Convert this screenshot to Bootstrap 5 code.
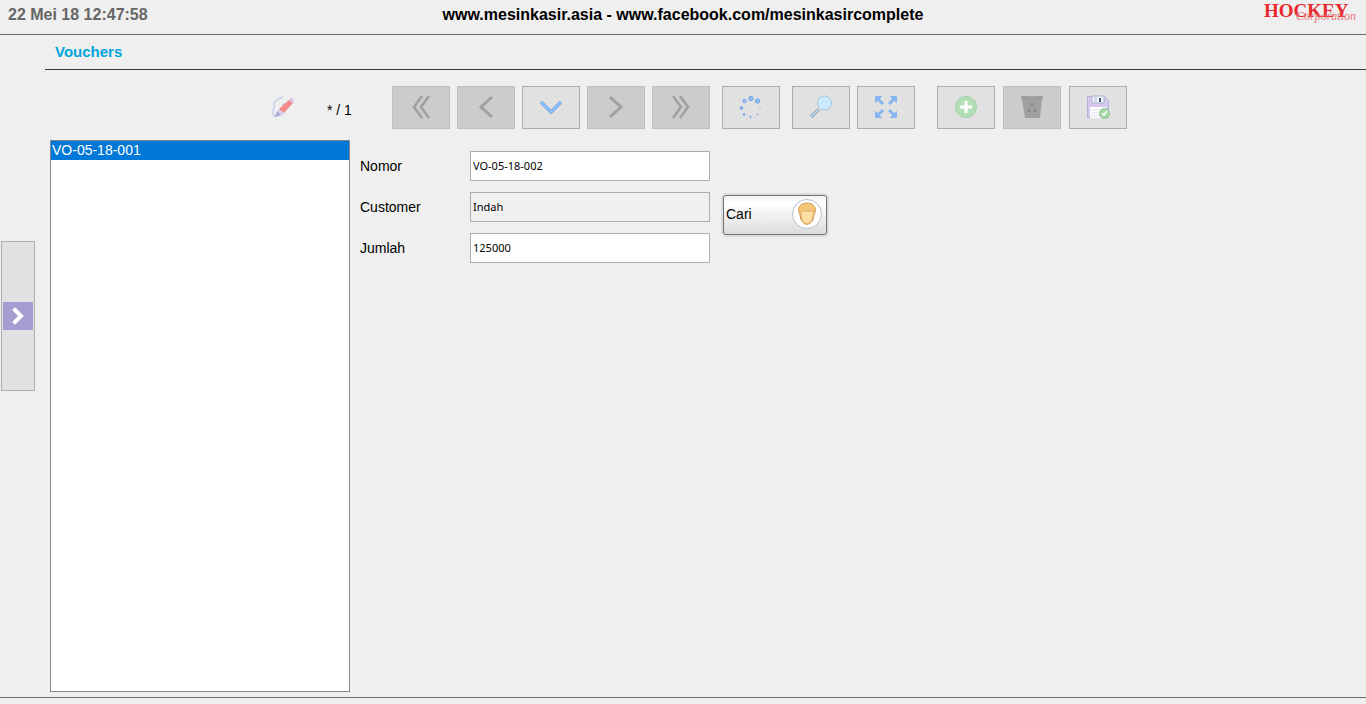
<!DOCTYPE html>
<html lang="id">
<head>
<meta charset="utf-8">
<meta name="viewport" content="width=device-width, initial-scale=1">
<title>Vouchers</title>
<link href="https://cdn.jsdelivr.net/npm/bootstrap@5.3.0/dist/css/bootstrap.min.css" rel="stylesheet">
<style>
  body { background: #efefef; color: #000; font: 14px/20px "Liberation Sans", Arial, sans-serif; }
  .topbar { height: 35px; border-bottom: 1px solid #696969; font-size: 16px; font-weight: 700; }
  .topbar > * { flex: 1 1 0; }
  .topbar .site { flex: 0 0 auto; line-height: 30px; }
  .clock { color: #666; line-height: 30px; }
  .rail { width: 45px; padding: 206px 0 0 1px; }
  .rail-toggle { width: 34px; height: 150px; background: #e1e1e1; border: 1px solid #adadad; }
  .rail-toggle span { height: 28px; background: #a69cd2; margin: 0 1px; }
  .screen-title { height: 35px; border-bottom: 1px solid #3c3c3c; padding-left: 10px; color: #00a5dc; font-size: 15px; font-weight: 700; line-height: 34px; }
  .tools { padding: 16px 0 11px 226px; }
  .mode { width: 56px; padding-bottom: 2px; }
  .counter { width: 65px; padding-top: 5px; }
  .tool-set { gap: 7px; margin-right: 12px; }
  .tool-set.wide { gap: 8px; margin-left: 10px; }
  .tool { width: 58px; height: 43px; padding: 0 0 2px; background: #e1e1e1; border: 1px solid #adadad; border-radius: 0; }
  .tool:disabled { background: #ccc; border-color: #bfbfbf; opacity: 1; }
  .tool svg, .mode svg { display: block; }
  .records-row { padding-left: 5px; }
  .records { width: 300px; padding: 0; border: 1px solid #828790; background: #fff; outline: 0; overflow: hidden; font-size: 14px; }
  .records option { padding: 1px 1px 0; line-height: 18px; min-height: 19px; color: #000; }
  .records option:checked { background: #0078d7 linear-gradient(#0078d7, #0078d7); -webkit-text-fill-color: #fff; }
  .voucher-form { padding: 11px 10px; gap: 13px; }
  .field { margin-bottom: 11px; }
  .field label { width: 110px; }
  .field input { width: 240px; height: 30px; padding: 0 2px 2px; border: 1px solid #abadb3; border-radius: 0; background: #fff; color: #000; font: 11px/14px "Noto Sans", Tahoma, sans-serif; }
  .field input[readonly] { background: #f0f0f0; }
  .find { width: 104px; height: 40px; margin-top: 44px; padding: 0 3px 2px 2px; border: 1px solid #707070; border-radius: 3px; background: linear-gradient(#f4f4f4, #fff 20%, #dcdcdc); box-shadow: 0 0 0 2px #dcdcdc; color: #000; font-size: 14px; }
  .bottombar { height: 7px; border-top: 1px solid #696969; margin-top: 5px; }
</style>
</head>
<body class="d-flex flex-column min-vh-100">
<header class="topbar d-flex">
  <time class="clock ps-2">22 Mei 18 12:47:58</time>
  <div class="site">www.mesinkasir.asia - www.facebook.com/mesinkasircomplete</div>
  <div class="d-flex justify-content-end pe-2">
    <svg width="96" height="26" role="img" aria-label="Hockey Corporation">
      <text x="2" y="17" font-family="Liberation Serif, serif" font-weight="700" font-size="19" fill="#e8282b">HOCKEY</text>
      <text x="34" y="20" font-family="Liberation Serif, serif" font-style="italic" font-weight="400" font-size="12" fill="#e8777a">Corporation</text>
    </svg>
  </div>
</header>

<div class="d-flex flex-grow-1">
  <nav class="rail flex-shrink-0" aria-label="Menu">
    <button type="button" class="rail-toggle d-flex flex-column justify-content-center p-0" aria-label="Buka menu">
      <span class="d-flex align-items-center justify-content-center align-self-stretch">
        <svg width="14" height="18" fill="none" stroke="#fff" stroke-width="4"><path d="M4 3l6 6-6 6" stroke-linecap="square"/></svg>
      </span>
    </button>
  </nav>

  <main class="d-flex flex-column flex-grow-1">
    <h1 class="screen-title mb-0">Vouchers</h1>

    <div class="tools d-flex align-items-center">
      <div class="mode">
        <svg width="25" height="24" fill="none">
          <path d="M12 2C8 3 2 7 3 9c2 3-2 6-1 9q0 3 3 4" stroke="#c7d2ea" stroke-width="1.5"/>
          <path d="M4 22l2-6 5 4z" fill="#a9aad6"/>
          <path d="M6 16l2-2 5 4-3 3z" fill="#d6cdec"/>
          <path d="M8 14L18 5l4 3-9 10z" fill="#f58a8b"/>
          <path d="M18 5l2-2q2 0 3 2 0 1-1 3z" fill="#dbc6e8"/>
          <path d="M11 10l4-2" stroke="#b9b5df"/>
        </svg>
      </div>
      <div class="counter">* / 1</div>
      <div class="tool-set d-flex">
        <button type="button" class="tool btn d-flex align-items-center justify-content-center" disabled aria-label="Pertama">
          <svg width="24" height="24" fill="none" stroke="#a0a0a0" stroke-width="2.5"><path d="M13 1L5 12l8 11M20 1l-8 11 8 11"/></svg>
        </button>
        <button type="button" class="tool btn d-flex align-items-center justify-content-center" disabled aria-label="Sebelumnya">
          <svg width="24" height="24" fill="none" stroke="#a0a0a0" stroke-width="3"><path d="M18 2L7 12l11 10"/></svg>
        </button>
        <button type="button" class="tool btn d-flex align-items-center justify-content-center" aria-label="Buka">
          <svg width="24" height="24" fill="none"><path d="M2 7l10 10L22 7" stroke="#7da9e6" stroke-width="3.5"/><path d="M2 7l10 10L22 7" stroke="#8fc8fb" stroke-width="1.5"/></svg>
        </button>
        <button type="button" class="tool btn d-flex align-items-center justify-content-center" disabled aria-label="Berikutnya">
          <svg width="24" height="24" fill="none" stroke="#a0a0a0" stroke-width="3"><path d="M6 2l11 10L6 22"/></svg>
        </button>
        <button type="button" class="tool btn d-flex align-items-center justify-content-center" disabled aria-label="Terakhir">
          <svg width="24" height="24" fill="none" stroke="#a0a0a0" stroke-width="2.5"><path d="M4 1l8 11-8 11M11 1l8 11-8 11"/></svg>
        </button>
      </div>
      <div class="tool-set d-flex">
        <button type="button" class="tool btn d-flex align-items-center justify-content-center" aria-label="Muat ulang">
          <svg width="24" height="24" fill="#8dbcf5" stroke="#7ba6e6">
            <circle cx="12" cy="3.5" r="2.2"/><circle cx="18.5" cy="6" r="2.2"/><circle cx="5.500" cy="6" r="1.700"/><circle cx="2.500" cy="13" r="1.400"/><circle cx="5" cy="19.500" r="1"/><circle cx="11.500" cy="22" r=".7"/><circle cx="18.500" cy="19.500" r=".5"/><circle cx="21" cy="13" r=".2"/>
          </svg>
        </button>
      </div>
      <div class="tool-set d-flex">
        <button type="button" class="tool btn d-flex align-items-center justify-content-center" aria-label="Cari data">
          <svg width="24" height="24" fill="none"><path d="M2 22l8-8" stroke="#94aec4" stroke-width="3.500"/><path d="M2 22l8-8" stroke="#c5d9e8" stroke-width="1.500"/><circle cx="15.500" cy="8" r="7" fill="#cdebff" stroke="#a9c4d8"/></svg>
        </button>
        <button type="button" class="tool btn d-flex align-items-center justify-content-center" aria-label="Layar penuh">
          <svg width="24" height="24" fill="#86b5f3" stroke="#86b5f3">
            <g id="arrow"><path d="M1.500 1.500h6L1.500 7.500z"/><path d="M3 3l6 6" stroke-width="3"/></g>
            <use href="#arrow" transform="matrix(-1 0 0 1 24 0)"/><use href="#arrow" transform="matrix(1 0 0 -1 0 24)"/><use href="#arrow" transform="rotate(180 12 12)"/>
          </svg>
        </button>
      </div>
      <div class="tool-set wide d-flex">
        <button type="button" class="tool btn d-flex align-items-center justify-content-center" aria-label="Tambah">
          <svg width="24" height="24"><circle cx="12" cy="12" r="10.500" fill="#b4e0b7" stroke="#9fd0a6"/><path d="M12 6v12M6 12h12" stroke="#fff" stroke-width="3"/></svg>
        </button>
        <button type="button" class="tool btn d-flex align-items-center justify-content-center" disabled aria-label="Hapus">
          <svg width="24" height="24"><path d="M1 1h22v3h-1l-2 19H5L2 4H1z" fill="#a0a0a0"/><path d="M1 3.500h22" stroke="#989898"/><path d="M10 11l2-3 2 3M15 13l1 3h-3M9 13l-1 3h3" fill="none" stroke="#8c8c8c" stroke-width="1.500"/></svg>
        </button>
        <button type="button" class="tool btn d-flex align-items-center justify-content-center" aria-label="Simpan">
          <svg width="24" height="24"><path d="M1.500 1.500h17l4 4v17h-21z" fill="#d5c8ec" stroke="#baaed8"/><path d="M6 1h12v7H6z" fill="#f5f5fc" stroke="#a7b0cf"/><path d="M8 2h3v6H8z" fill="#ccd6ea"/><path d="M13 3h2v4h-2z" fill="#40537c"/><path d="M4 12h16v11H4z" fill="#fff"/><path d="M5 15h12M5 18h10M5 21h9" stroke="#ddddec"/><circle cx="18.500" cy="18.500" r="5" fill="#a3d7a4" stroke="#8ec591"/><path d="M16 18l2 2 3-4" fill="none" stroke="#fff" stroke-width="1.500"/></svg>
        </button>
      </div>
    </div>

    <div class="records-row d-flex flex-grow-1">
      <select class="records flex-shrink-0 rounded-0" size="2" aria-label="Daftar voucher">
        <option selected>VO-05-18-001</option>
      </select>
      <form class="voucher-form d-flex align-items-start">
        <div>
          <div class="field d-flex align-items-center"><label for="nomor">Nomor</label><input id="nomor" type="text" value="VO-05-18-002"></div>
          <div class="field d-flex align-items-center"><label for="customer">Customer</label><input id="customer" type="text" value="Indah" readonly></div>
          <div class="field d-flex align-items-center"><label for="jumlah">Jumlah</label><input id="jumlah" type="text" value="125000"></div>
        </div>
        <button type="button" class="find btn d-flex align-items-center justify-content-between">Cari
          <svg width="32" height="32"><circle cx="16" cy="16" r="14.500" fill="#fff" stroke="#b5c0cb"/><path d="M9 17C5 9 10 5 16 5s11 4 7 12l-1 5q-6 9-12 0z" fill="#f3c577" stroke="#cf9f58"/><path d="M10 15q1-3 6-2 5-1 7 1l-2 8q-5 8-10 0z" fill="#ffdfa5" stroke="#dcae65"/></svg>
        </button>
      </form>
    </div>
  </main>
</div>
<footer class="bottombar"></footer>
<script src="https://cdn.jsdelivr.net/npm/bootstrap@5.3.0/dist/js/bootstrap.bundle.min.js"></script>
</body>
</html>
